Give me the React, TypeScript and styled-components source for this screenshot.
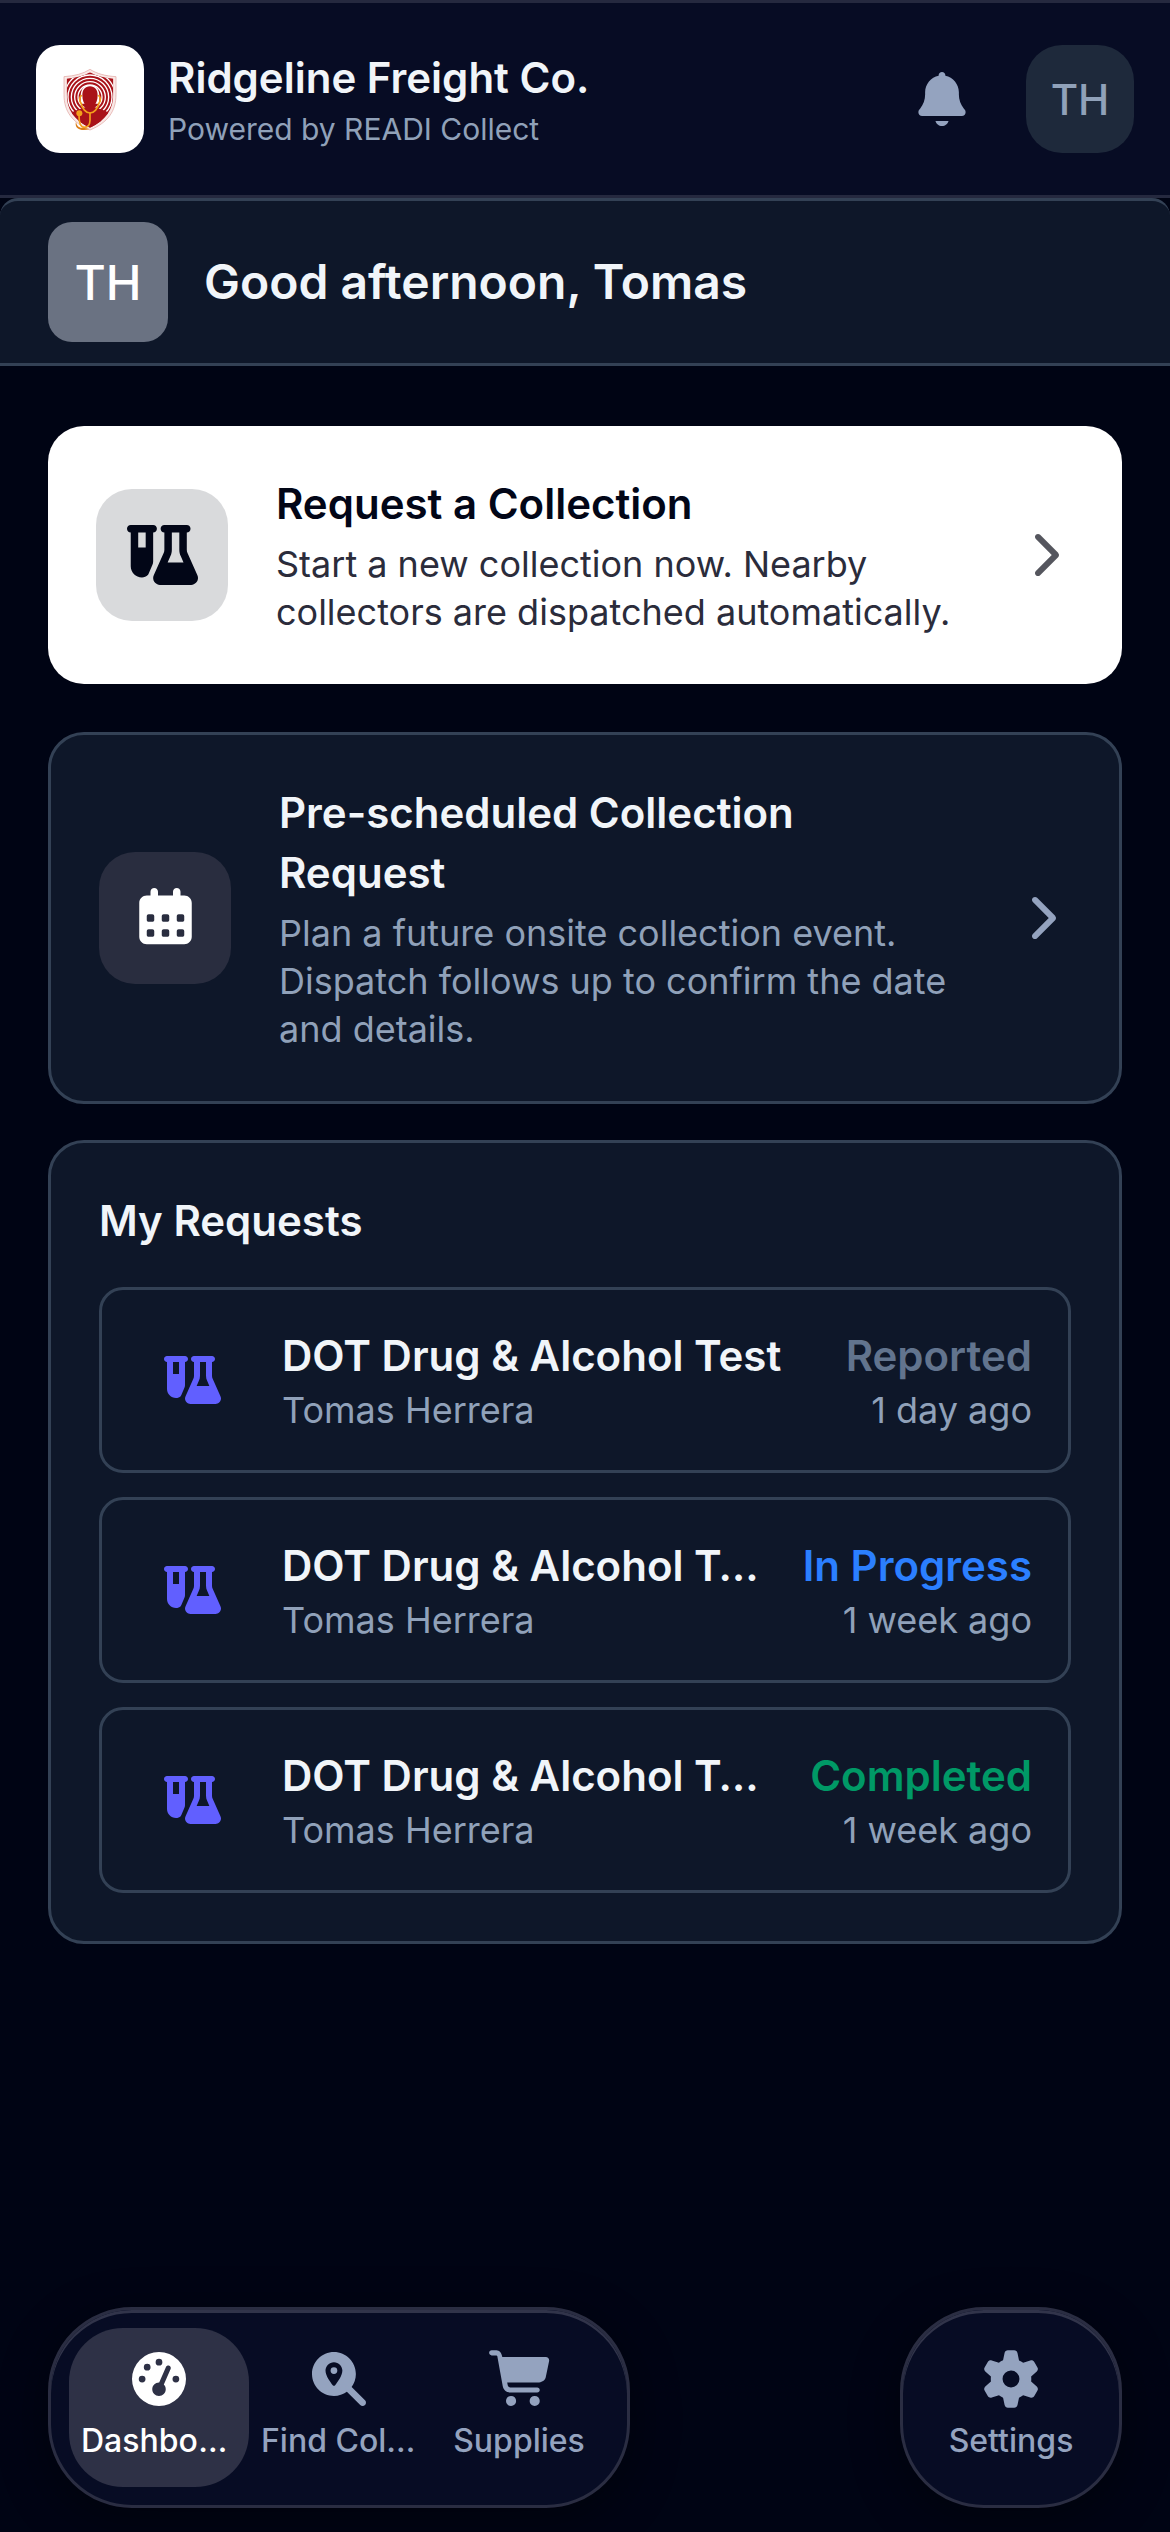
import type { ReactNode } from "react";
import { FaChevronRight, FaGaugeHigh, FaMagnifyingGlassLocation } from "react-icons/fa6";
import styled, { createGlobalStyle } from "styled-components";

const GlobalStyle = createGlobalStyle`
    * {
        box-sizing: border-box;
    }

    body {
        margin: 0;
        background: #000414;
        color: #f1f5f9;
        font-family: Inter, "Liberation Sans", sans-serif;
    }

    h1, h2, h3, p, ul {
        margin: 0;
        padding: 0;
        font-weight: inherit;
    }

    button {
        border: 0;
        padding: 0;
        background: none;
        color: inherit;
        font: inherit;
        text-align: left;
        cursor: pointer;
    }

    svg {
        display: block;
        flex: none;
        overflow: visible;
    }
`;

const Page = styled.div`
    display: flex;
    flex-direction: column;
    min-height: 100vh;
`;

// Header
const Header = styled.header`
    display: flex;
    align-items: center;
    padding: 42px 36px;
    background: #070c24;
    border-top: 3px solid #25293f;
    border-bottom: 3px solid #25293f;
`;

const LogoTile = styled.div`
    display: grid;
    place-items: center;
    width: 108px;
    height: 108px;
    margin-right: 24px;
    background: #fff;
    border-radius: 24px;
`;

const Brand = styled.div`
    flex: 1;
    min-width: 0;
`;

const BrandName = styled.h1`
    font-size: 42px;
    line-height: 60px;
    font-weight: 600;
`;

const BrandNote = styled.p`
    font-size: 30px;
    line-height: 42px;
    color: #90a1b9;
`;

const BellButton = styled.button`
    display: grid;
    place-items: center;
    width: 108px;
    height: 108px;
    margin-right: 30px;
    color: #94a3bf;
`;

const HeaderAvatar = styled.button`
    width: 108px;
    height: 108px;
    background: #1e293b;
    border-radius: 36px;
    color: #90a1b9;
    font-size: 42px;
    font-weight: 500;
    text-align: center;
`;

// Greeting
const Banner = styled.section`
    display: flex;
    align-items: center;
    gap: 36px;
    padding: 21px 48px;
    background: #0e1729;
    border-top: 3px solid #334155;
    border-bottom: 3px solid #334155;
    border-radius: 18px 18px 0 0;
`;

const BannerAvatar = styled.div`
    display: grid;
    place-items: center;
    width: 120px;
    height: 120px;
    background: #6a7282;
    border-radius: 24px;
    color: #fff;
    font-size: 48px;
    font-weight: 500;
`;

const Greeting = styled.h2`
    font-size: 48px;
    line-height: 60px;
    font-weight: 600;
`;

// Cards
const Main = styled.main`
    display: flex;
    flex-direction: column;
    padding: 60px 48px;
`;

const ActionCard = styled.button<{ $primary?: boolean }>`
    display: flex;
    align-items: center;
    gap: 48px;
    width: 100%;
    padding: 48px;
    margin-bottom: ${({ $primary }) => ($primary ? "48px" : "36px")};
    background: ${({ $primary }) => ($primary ? "#fff" : "#0e1729")};
    border: ${({ $primary }) => ($primary ? "0" : "3px solid #334155")};
    border-radius: 36px;
    color: ${({ $primary }) => ($primary ? "#020617" : "#f1f5f9")};
`;

const IconTile = styled.span<{ $primary?: boolean }>`
    display: grid;
    place-items: center;
    flex: none;
    width: 132px;
    height: 132px;
    background: ${({ $primary }) => ($primary ? "#d9dadc" : "#292d3f")};
    border-radius: 36px;
    color: ${({ $primary }) => ($primary ? "#020617" : "#fff")};
`;

const CardText = styled.span`
    display: flex;
    flex: 1;
    flex-direction: column;
    gap: 6px;
    min-width: 0;
`;

const CardTitle = styled.span`
    font-size: 42px;
    line-height: 60px;
    font-weight: 600;
`;

const CardNote = styled.span<{ $primary?: boolean }>`
    font-size: 36px;
    line-height: 48px;
    color: ${({ $primary }) => ($primary ? "#2b2c3b" : "#90a1b9")};
`;

const Arrow = styled.span<{ $primary?: boolean }>`
    display: grid;
    place-items: center;
    width: 60px;
    color: ${({ $primary }) => ($primary ? "#55565e" : "#94a3bf")};
`;

// Requests
const Panel = styled.section`
    display: flex;
    flex-direction: column;
    gap: 36px;
    padding: 48px;
    background: #0e1729;
    border: 3px solid #334155;
    border-radius: 36px;
`;

const PanelTitle = styled.h2`
    font-size: 42px;
    line-height: 60px;
    font-weight: 600;
`;

const RequestList = styled.ul`
    display: flex;
    flex-direction: column;
    gap: 24px;
    list-style: none;
`;

const RequestRow = styled.button`
    display: flex;
    align-items: center;
    gap: 36px;
    width: 100%;
    padding: 36px;
    border: 3px solid #334155;
    border-radius: 24px;
`;

const RequestIcon = styled.span`
    display: grid;
    place-items: center;
    flex: none;
    width: 108px;
    color: #615fff;
`;

const RequestText = styled.span`
    display: flex;
    flex: 1;
    flex-direction: column;
    min-width: 0;
`;

const RequestSide = styled.span`
    display: flex;
    flex: none;
    flex-direction: column;
    align-items: flex-end;
`;

const RequestName = styled.span`
    overflow: hidden;
    font-size: 42px;
    line-height: 60px;
    font-weight: 600;
    white-space: nowrap;
    text-overflow: ellipsis;
`;

const RequestStatus = styled.span<{ $color: string }>`
    font-size: 42px;
    line-height: 60px;
    font-weight: 600;
    color: ${({ $color }) => $color};
`;

const RequestMeta = styled.span`
    font-size: 36px;
    line-height: 48px;
    color: #90a1b9;
`;

// Bottom navigation
const NavBar = styled.nav`
    position: sticky;
    bottom: 0;
    display: flex;
    justify-content: space-between;
    margin-top: auto;
    padding: 0 48px 24px;
`;

const NavPill = styled.div`
    display: flex;
    padding: 18px;
    background: #070c24;
    border: 3px solid #2a2d42;
    border-radius: 84px;
    box-shadow: inset 0 3px 0 #31344a, 0 12px 48px rgba(0, 0, 0, 0.4);
`;

const NavItem = styled.a<{ $active?: boolean }>`
    display: flex;
    flex-direction: column;
    align-items: center;
    gap: 12px;
    width: 180px;
    padding: 24px 12px;
    background: ${({ $active }) => ($active ? "#2e3146" : "transparent")};
    border-radius: 54px;
    color: ${({ $active }) => ($active ? "#fff" : "#94a3bf")};
    text-decoration: none;
`;

const NavLabel = styled.span`
    max-width: 100%;
    overflow: hidden;
    font-size: 32px;
    line-height: 45px;
    font-weight: 500;
    white-space: nowrap;
    text-overflow: ellipsis;
`;

function BrandLogo() {
    return (
        <svg width="54" height="61" viewBox="0 0 160 183" aria-hidden="true">
            <defs>
                <clipPath id="shield">
                    <path d="M80 10C62 21 38 27 10 29v46c0 46 22 79 70 101 48-22 70-55 70-101V29C122 27 98 21 80 10z" />
                </clipPath>
            </defs>
            <path
                d="M80 1C60 14 34 21 2 23v54c0 50 25 84 78 106 53-22 78-56 78-106V23C126 21 100 14 80 1z"
                fill="#f9e9e7"
                stroke="#e0a29d"
                strokeWidth="2"
            />
            <g clipPath="url(#shield)">
                <rect width="160" height="183" fill="#a91219" />
                <g fill="none" stroke="#fff" strokeWidth="4">
                    <circle cx="80" cy="84" r="36" />
                    <circle cx="80" cy="84" r="46" />
                    <circle cx="80" cy="84" r="56" />
                    <circle cx="80" cy="84" r="66" />
                    <circle cx="80" cy="84" r="76" />
                </g>
                <path d="M80 48c17 0 27 11 28 31v25H52V79c1-20 11-31 28-31z" fill="#fff" />
                <path
                    d="M80 52c15 0 23 11 23 27 0 15-5 24-10 31v4l34 12c11 6 20 16 24 29v28H9v-28c4-13 13-23 24-29l34-12v-4c-5-7-10-16-10-31 0-16 8-27 23-27z"
                    fill="#a91219"
                />
            </g>
            <g fill="none" stroke="#f3a01c" strokeWidth="5" strokeLinecap="round">
                <path d="M54 80c-7 5-6 16-1 22 3 17 15 30 27 30s24-13 27-30c5-6 6-17-1-22" />
                <path d="M80 132v22c0 14-8 21-17 21-11 0-16-9-16-38" />
            </g>
            <circle cx="48" cy="133" r="9" fill="#f3a01c" />
            <path d="M38 158c2 15 12 20 26 19l15 3c-12 4-29 5-38-4-4-5-5-11-3-18z" fill="#dc7d16" />
        </svg>
    );
}

function BellIcon() {
    return (
        <svg width="48" height="54" viewBox="0 0 448 512" fill="currentColor" aria-hidden="true">
            <path d="M224 0c-17.7 0-32 14.3-32 32l0 3.2C119 50 64 114.6 64 192l0 21.7c0 48.1-16.4 94.8-46.4 132.4L7.8 358.3C2.7 364.6 0 372.4 0 380.5 0 400.1 15.9 416 35.5 416l376.9 0c19.6 0 35.5-15.9 35.5-35.5 0-8.1-2.7-15.9-7.8-22.2l-9.8-12.2C400.4 308.5 384 261.8 384 213.7l0-21.7c0-77.4-55-142-128-156.8l0-3.2c0-17.7-14.3-32-32-32zM162 464c7.1 27.6 32.2 48 62 48s54.9-20.4 62-48l-124 0z" />
        </svg>
    );
}

function FlaskVialIcon({ size }: { size: number }) {
    return (
        <svg width={Math.round((size * 608) / 512)} height={size} viewBox="0 0 608 512" fill="currentColor" fillRule="evenodd" aria-hidden="true">
            <path d="M32 0C14.3 0 0 14.3 0 32s14.3 32 32 32v288c0 53 43 96 96 96 20 0 38-8 50-20 3-3 5-7 7-11l33-78c4-9 6-18 6-28V64c17.7 0 32-14.3 32-32S241.7 0 224 0zM96 64h64v128H96z" />
            <path d="M320 0c-17.7 0-32 14.3-32 32s14.3 32 32 32v146c0 10-2 20-6 29L230 428c-4 8-6 17-6 26 0 32 26 58 58 58h268c32 0 58-26 58-58 0-9-2-18-6-26L518 239c-4-9-6-19-6-29V64c17.7 0 32-14.3 32-32S529.7 0 512 0zM384 64h64v146c0 19 4 38 12 55l24 55H348l24-55c8-17 12-36 12-55z" />
        </svg>
    );
}

function CalendarIcon() {
    const hole = "l0 32c0 8.8 7.2 16 16 16l32 0c8.8 0 16-7.2 16-16l0-32c0-8.8-7.2-16-16-16l-32 0c-8.8 0-16 7.2-16 16z";
    const holes = [240, 368].flatMap((y) => [64, 192, 320].map((x) => `M${x} ${y}${hole}`)).join("");

    return (
        <svg width="53" height="60" viewBox="0 0 448 512" fill="currentColor" fillRule="evenodd" aria-hidden="true">
            <path
                d={`M128 0c17.7 0 32 14.3 32 32l0 32 128 0 0-32c0-17.7 14.3-32 32-32s32 14.3 32 32l0 32 32 0c35.3 0 64 28.7 64 64l0 288c0 35.3-28.7 64-64 64L64 480c-35.3 0-64-28.7-64-64L0 128C0 92.7 28.7 64 64 64l32 0 0-32c0-17.7 14.3-32 32-32z${holes}`}
            />
        </svg>
    );
}

function CartIcon() {
    return (
        <svg width="61" height="54" viewBox="0 0 576 512" fill="currentColor" aria-hidden="true">
            <path d="M24-16C10.7-16 0-5.3 0 8S10.7 32 24 32l45.3 0c3.9 0 7.2 2.8 7.9 6.6l52.1 286.3c6.2 34.2 36 59.1 70.8 59.1L456 384c13.3 0 24-10.7 24-24s-10.7-24-24-24l-255.9 0c-11.6 0-21.5-8.3-23.6-19.7l-5.1-28.3 303.6 0c30.8 0 57.2-21.9 62.9-52.2L568.9 85.9C572.6 66.2 557.5 48 537.4 48L124.7 48l-.4-2C119.4 10 96.6-16 69.3-16L24-16zM208 512a48 48 0 1 0 0-96 48 48 0 1 0 0 96zm224 0a48 48 0 1 0 0-96 48 48 0 1 0 0 96z" />
        </svg>
    );
}

function GearIcon() {
    return (
        <svg width="54" height="54" viewBox="0 0 512 512" fill="currentColor" aria-hidden="true">
            <path d="M195.1 9.5C198.1-5.3 211.2-16 226.4-16l59.8 0c15.2 0 28.3 10.7 31.3 25.5L332 79.5c14.1 6 27.3 13.7 39.3 22.8l67.8-22.5c14.4-4.8 30.2 1.2 37.8 14.4l29.9 51.8c7.6 13.2 4.9 29.8-6.5 39.9L447 233.3c.9 7.4 1.3 15 1.3 22.7s-.5 15.3-1.3 22.7l53.4 47.5c11.4 10.1 14 26.8 6.5 39.9l-29.9 51.8c-7.6 13.1-23.4 19.2-37.8 14.4l-67.8-22.5c-12.1 9.1-25.3 16.7-39.3 22.8l-14.4 69.9c-3.1 14.9-16.2 25.5-31.3 25.5l-59.8 0c-15.2 0-28.3-10.7-31.3-25.5l-14.4-69.9c-14.1-6-27.2-13.7-39.3-22.8L73.5 432.3c-14.4 4.8-30.2-1.2-37.8-14.4L5.8 366.1c-7.6-13.2-4.9-29.8 6.5-39.9l53.4-47.5c-.9-7.4-1.3-15-1.3-22.7s.5-15.3 1.3-22.7L12.3 185.8c-11.4-10.1-14-26.8-6.5-39.9L35.7 94.1c7.6-13.2 23.4-19.2 37.8-14.4l67.8 22.5c12.1-9.1 25.3-16.7 39.3-22.8L195.1 9.5zM256.3 336a80 80 0 1 0 -.6-160 80 80 0 1 0 .6 160z" />
        </svg>
    );
}

interface ActionProps {
    icon: ReactNode;
    title: string;
    note: string;
    primary?: boolean;
}

function Action({ icon, title, note, primary }: ActionProps) {
    return (
        <ActionCard type="button" $primary={primary}>
            <IconTile $primary={primary}>{icon}</IconTile>
            <CardText>
                <CardTitle>{title}</CardTitle>
                <CardNote $primary={primary}>{note}</CardNote>
            </CardText>
            <Arrow $primary={primary}>
                <FaChevronRight size={48} />
            </Arrow>
        </ActionCard>
    );
}

const requests = [
    { id: 1, name: "DOT Drug & Alcohol Test", person: "Tomas Herrera", status: "Reported", color: "#62748e", age: "1 day ago" },
    { id: 2, name: "DOT Drug & Alcohol Test", person: "Tomas Herrera", status: "In Progress", color: "#2b7fff", age: "1 week ago" },
    { id: 3, name: "DOT Drug & Alcohol Test", person: "Tomas Herrera", status: "Completed", color: "#009966", age: "1 week ago" },
];

export default function App() {
    return (
        <Page>
            <GlobalStyle />
            <Header>
                <LogoTile>
                    <BrandLogo />
                </LogoTile>
                <Brand>
                    <BrandName>Ridgeline Freight Co.</BrandName>
                    <BrandNote>Powered by READI Collect</BrandNote>
                </Brand>
                <BellButton type="button" aria-label="Notifications">
                    <BellIcon />
                </BellButton>
                <HeaderAvatar type="button">TH</HeaderAvatar>
            </Header>

            <Banner>
                <BannerAvatar>TH</BannerAvatar>
                <Greeting>Good afternoon, Tomas</Greeting>
            </Banner>

            <Main>
                <Action
                    primary
                    icon={<FlaskVialIcon size={60} />}
                    title="Request a Collection"
                    note="Start a new collection now. Nearby collectors are dispatched automatically."
                />
                <Action
                    icon={<CalendarIcon />}
                    title="Pre-scheduled Collection Request"
                    note="Plan a future onsite collection event. Dispatch follows up to confirm the date and details."
                />

                <Panel>
                    <PanelTitle>My Requests</PanelTitle>
                    <RequestList>
                        {requests.map((request) => (
                            <li key={request.id}>
                                <RequestRow type="button">
                                    <RequestIcon>
                                        <FlaskVialIcon size={48} />
                                    </RequestIcon>
                                    <RequestText>
                                        <RequestName>{request.name}</RequestName>
                                        <RequestMeta>{request.person}</RequestMeta>
                                    </RequestText>
                                    <RequestSide>
                                        <RequestStatus $color={request.color}>{request.status}</RequestStatus>
                                        <RequestMeta>{request.age}</RequestMeta>
                                    </RequestSide>
                                </RequestRow>
                            </li>
                        ))}
                    </RequestList>
                </Panel>
            </Main>

            <NavBar>
                <NavPill>
                    <NavItem href="#dashboard" $active aria-current="page">
                        <FaGaugeHigh size={54} />
                        <NavLabel>Dashboard</NavLabel>
                    </NavItem>
                    <NavItem href="#collectors">
                        <FaMagnifyingGlassLocation size={54} />
                        <NavLabel>Find Collector</NavLabel>
                    </NavItem>
                    <NavItem href="#supplies">
                        <CartIcon />
                        <NavLabel>Supplies</NavLabel>
                    </NavItem>
                </NavPill>
                <NavPill>
                    <NavItem href="#settings">
                        <GearIcon />
                        <NavLabel>Settings</NavLabel>
                    </NavItem>
                </NavPill>
            </NavBar>
        </Page>
    );
}
